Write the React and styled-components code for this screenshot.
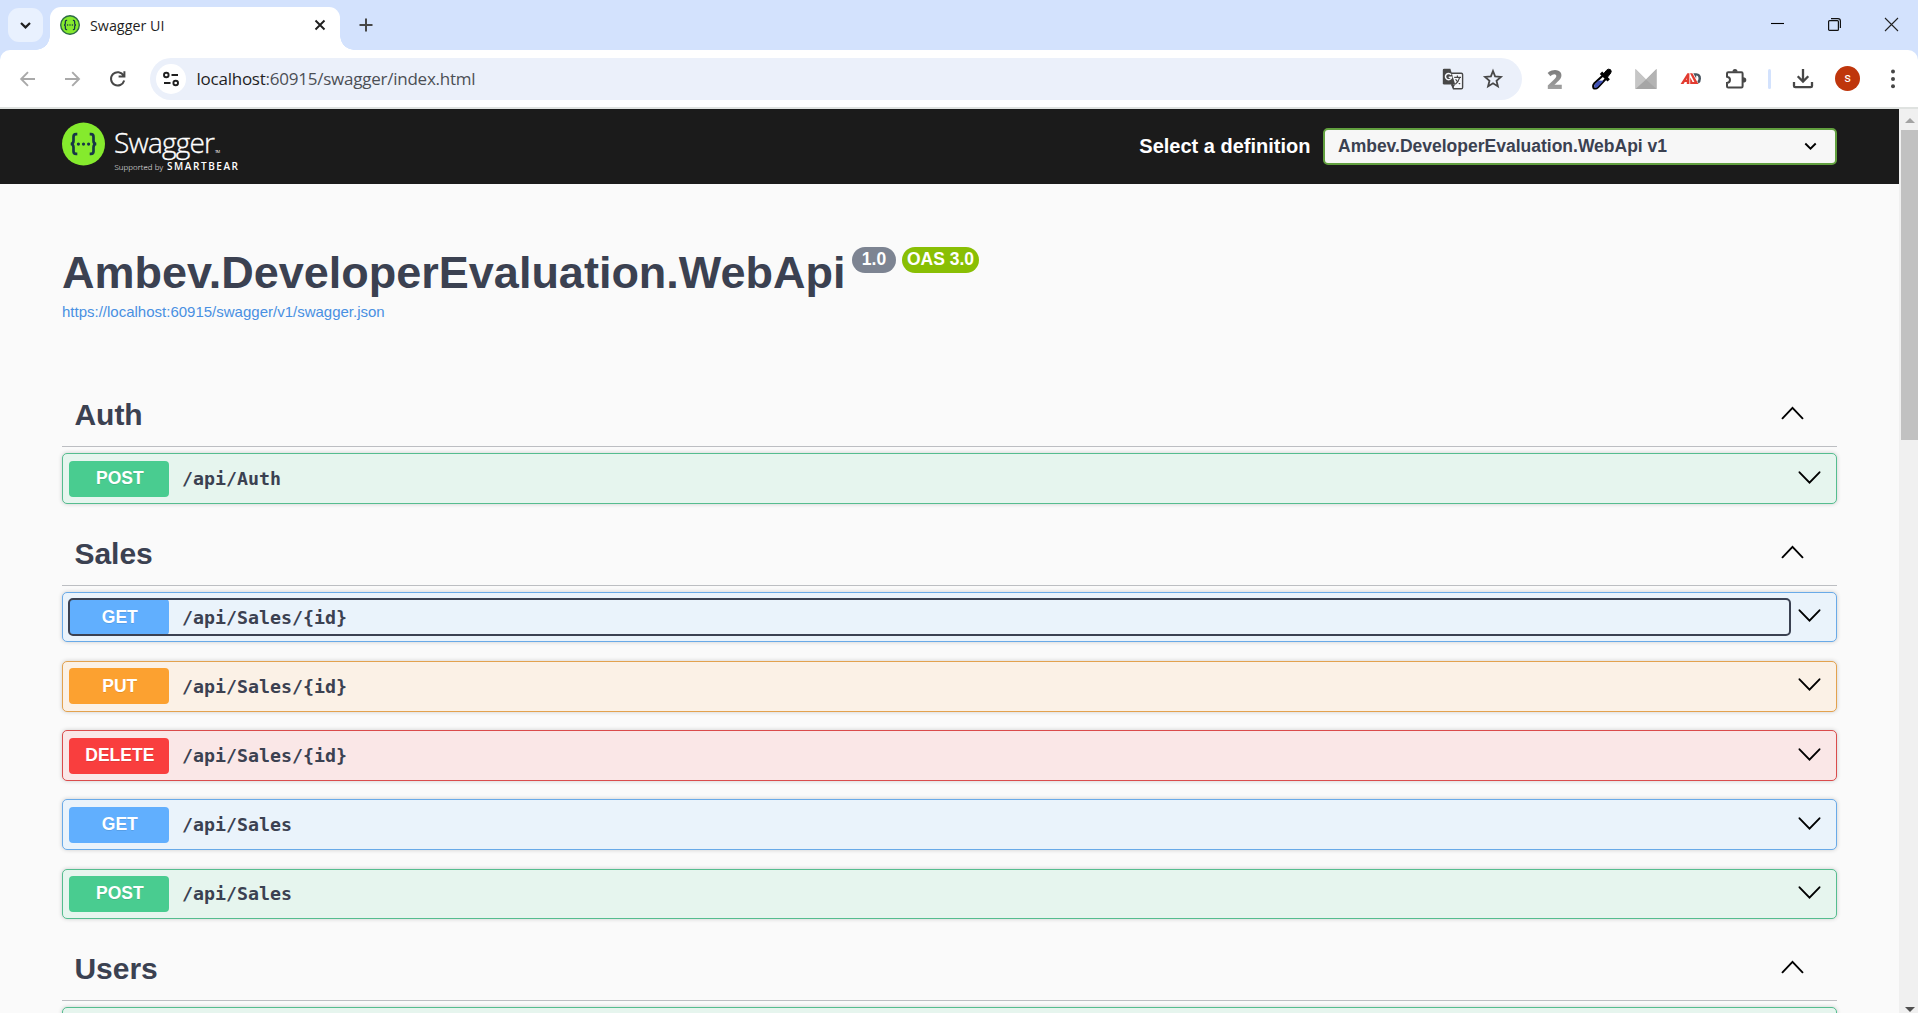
import React from "react";
import styled, { createGlobalStyle } from "styled-components";

const GlobalStyle = createGlobalStyle`
  * { box-sizing: border-box; }
  html, body { margin: 0; padding: 0; overflow: hidden; background: #fafafa; }
  h1, h2, p { margin: 0; }
  button { border: 0; margin: 0; padding: 0; background: none; font: inherit; color: inherit; text-align: left; }
  svg { display: block; flex: none; }
`;

const sans = `"Liberation Sans", Arial, sans-serif`;
const ui = `"Open Sans", "Noto Sans", sans-serif`;
const mono = `"DejaVu Sans Mono", "Liberation Mono", monospace`;

/* ---------- Browser frame ---------- */

const Browser = styled.div`
  display: grid;
  grid-template-columns: 1918px;
  grid-template-rows: 50px 57px 2px 1fr;
  width: 1918px;
  height: 1013px;
  overflow: hidden;
  font-family: ${sans};
`;

const TabStrip = styled.div`
  display: flex;
  align-items: flex-end;
  background: #d3e2fd;
`;

const TabSearch = styled.button`
  display: grid;
  place-items: center;
  align-self: flex-start;
  width: 35px;
  height: 34px;
  margin: 8px 0 0 8px;
  border-radius: 11px;
  background: #e9f1fe;
`;

const TabFlare = styled.div`
  width: 14px;
  height: 14px;
  background: radial-gradient(circle at ${(p) => (p.$side === "left" ? "0 0" : "100% 0")}, transparent 13.5px, #fff 14px);
  margin-left: ${(p) => (p.$side === "left" ? "-7px" : "0")};
`;

const Tab = styled.div`
  display: flex;
  align-items: center;
  width: 290px;
  height: 43px;
  padding: 0 14px 7px 10px;
  border-radius: 11px 11px 0 0;
  background: #fff;
`;

const TabTitle = styled.span`
  flex: 1;
  margin-left: 10px;
  padding-top: 1px;
  font: 400 14.3px/20px ${ui};
  letter-spacing: 0;
  color: #1f1f1f;
  white-space: nowrap;
`;

const NewTab = styled.div`
  align-self: flex-start;
  margin: 18px 0 0 5px;
`;

const WindowButtons = styled.div`
  display: flex;
  align-self: flex-start;
  gap: 42px;
  margin: 17px 19px 0 auto;
`;

const ToolbarEdge = styled.div`
  background: #d3e2fd;
`;

const Toolbar = styled.div`
  display: flex;
  align-items: center;
  height: 57px;
  border-radius: 10px 10px 0 0;
  background: #fff;
`;

const NavIcons = styled.div`
  display: flex;
  gap: 23px;
  width: 150px;
  padding-left: 17px;
`;

const Omnibox = styled.div`
  display: flex;
  align-items: center;
  width: 1372px;
  height: 42px;
  padding: 0 18px 0 6px;
  border-radius: 21px;
  background: #ebf0fa;
`;

const SiteInfo = styled.div`
  display: grid;
  place-items: center;
  width: 30px;
  height: 30px;
  border-radius: 50%;
  background: #fff;
`;

const Url = styled.span`
  flex: 1;
  margin-left: 10.5px;
  padding-top: 1px;
  font: 400 17px/24px ${ui};
  letter-spacing: -0.24px;
  color: #4b4f55;
  white-space: nowrap;

  b {
    font-weight: 400;
    color: #1f1f1f;
  }
`;

const OmniboxActions = styled.div`
  display: flex;
  align-items: center;
  gap: 18px;
`;

const Extensions = styled.div`
  display: grid;
  grid-template-columns: 46px 47px 41px 50px 40px 26px 41px 49px 41px;
  align-items: center;
  justify-items: center;
  margin-left: 10px;
`;

const DigitBadge = styled.span`
  font: 800 27px/30px "Open Sans", ${sans};
  background: linear-gradient(#707070, #ababab);
  background-clip: text;
  color: transparent;
`;

const Separator = styled.i`
  width: 3px;
  height: 20px;
  border-radius: 2px;
  background: #d3e2fd;
`;

const Avatar = styled.span`
  width: 25px;
  height: 25px;
  border-radius: 50%;
  background: #bf360c;
  color: #fff;
  font: 400 13px/24px Roboto, ${sans};
  text-align: center;
`;

const ChromeDivider = styled.div`
  background: #dfe2e0;
`;

const Viewport = styled.div`
  display: flex;
  min-height: 0;
  overflow: hidden;
`;

const ScrollTrack = styled.div`
  display: flex;
  flex-direction: column;
  align-items: center;
  width: 19px;
  padding-left: 2px;
  background: #f0f0f0;
`;

const ScrollArrow = styled.i`
  width: 0;
  height: 0;
  border: 5px solid transparent;
  ${(p) =>
    p.$down
      ? "border-top-color: #505050; border-bottom: 0; margin: auto 0 1px;"
      : "border-bottom-color: #a3a3a3; border-top: 0; margin: 9px 0 7px;"}
`;

const ScrollThumb = styled.div`
  width: 17px;
  height: 310px;
  background: #c1c1c1;
`;

/* ---------- Swagger page ---------- */

const Page = styled.main`
  width: 1899px;
  overflow: hidden;
  background: #fafafa;
  color: #3b4151;
`;

const TopBar = styled.header`
  display: flex;
  align-items: center;
  justify-content: space-between;
  height: 75px;
  padding: 0 62px;
  background: #1b1b1b;
`;

const Definition = styled.div`
  display: flex;
  align-items: center;
  color: #fff;
`;

const DefinitionLabel = styled.span`
  padding-bottom: 2px;
  font: 700 20px/24px ${sans};
  margin-right: 12.5px;
`;

const Select = styled.div`
  display: flex;
  align-items: center;
  justify-content: space-between;
  width: 514px;
  height: 37px;
  padding: 0 18px 0 13px;
  border: 2px solid #62a03f;
  border-radius: 5px;
  background: #f7f7f7;
  color: #3b4151;
  font: 700 17.5px/20px ${sans};
`;

const SelectValue = styled.span`
  padding-bottom: 2px;
`;

const Wrapper = styled.div`
  padding: 0 62px;
`;

const Info = styled.section`
  height: 200.04px;
  padding-top: 62px;
`;

const TitleRow = styled.div`
  display: flex;
  align-items: flex-start;
  height: 57px;
`;

const Title = styled.h1`
  font: 700 45px/54px ${sans};
  white-space: nowrap;
`;

const Badge = styled.span`
  width: ${(p) => p.$width}px;
  height: 26px;
  margin: 1px 0 0 ${(p) => p.$gap}px;
  padding-left: 1px;
  border-radius: 13px;
  background: ${(p) => p.$color};
  color: #fff;
  font: 700 17.5px/24px ${sans};
  text-align: center;
  white-space: nowrap;
`;

const SpecLink = styled.a`
  display: block;
  color: #4990e2;
  font: 400 15px/17px ${sans};
`;

const TagHeader = styled.div`
  display: flex;
  align-items: center;
  justify-content: space-between;
  height: 63.2px;
  margin-bottom: 6.25px;
  padding: 0 33px 0 12.4px;
  border-bottom: 1px solid #bcbec2;

  svg {
    margin-top: -4px;
  }
`;

const TagName = styled.h2`
  font: 700 30px/36px ${sans};
`;

const palette = {
  POST: { solid: "#49cc90", tint: "#e6f5ee", line: "#55bd8f" },
  GET: { solid: "#61affe", tint: "#eaf3fb", line: "#69aae8" },
  PUT: { solid: "#fca130", tint: "#fbf1e6", line: "#e3a24e" },
  DELETE: { solid: "#f93e3e", tint: "#fae7e7", line: "#da4c4c" },
};

const OpBlock = styled.article`
  display: flex;
  align-items: flex-start;
  height: 50.4px;
  margin-bottom: 18.75px;
  padding: 6.25px 15px 0 6px;
  border: 1px solid ${(p) => palette[p.$method].line};
  border-radius: 5px;
  background: ${(p) => palette[p.$method].tint};
  box-shadow: 0 0 4px rgba(0, 0, 0, 0.19);
`;

const OpSummary = styled.button`
  display: flex;
  flex: none;
  align-items: flex-start;
  width: 1721px;
  height: 36px;
  border-radius: 4px;
  outline: ${(p) => (p.$focused ? "2px solid #3b4151" : "none")};
  outline-offset: -1px;
`;

const Method = styled.span`
  width: 100px;
  height: 36px;
  padding: 0.58px 0 0 1.6px;
  border-radius: 4px;
  background: ${(p) => palette[p.$method].solid};
  color: #fff;
  font: 700 17.5px/34px ${sans};
  text-align: center;
  text-shadow: 0 1px 0 rgba(0, 0, 0, 0.1);
`;

const Path = styled.span`
  margin-left: 13px;
  padding-top: 0.58px;
  color: #3b4151;
  font: 700 18.27px/36px ${mono};
  white-space: nowrap;
`;

const OpToggle = styled.button`
  margin: 10px 0 0 8px;
`;

/* ---------- Icons ---------- */

const Stroke = ({ w, h, d, color = "#000", width = 2, cap = "butt", children }) => (
  <svg width={w} height={h} viewBox={`0 0 ${w} ${h}`} fill="none" stroke={color} strokeWidth={width} strokeLinecap={cap}>
    {d && <path d={d} />}
    {children}
  </svg>
);

const ChevronDown = () => <Stroke w={23} h={14} d="M1.5 1.3 L11.5 11.7 L21.5 1.3" width={1.9} cap="round" />;
const ChevronUp = () => <Stroke w={23} h={14} d="M1.5 12.3 L11.5 1.9 L21.5 12.3" width={1.9} cap="round" />;

const Braces = ({ color }) => (
  <g fill="none" stroke={color} strokeWidth="2.7">
    <path d="M15.3 11.6 h-1.2 q-2.6 0 -2.6 2.7 v4 q0 3 -2.7 3.2 q2.7 .2 2.7 3.2 v4 q0 2.7 2.6 2.7 h1.2" />
    <path d="M27.7 11.6 h1.2 q2.6 0 2.6 2.7 v4 q0 3 2.7 3.2 q-2.7 .2 -2.7 3.2 v4 q0 2.7 -2.6 2.7 h-1.2" />
    <g fill={color} stroke="none">
      <circle cx="16.4" cy="21.6" r="1.6" />
      <circle cx="21.5" cy="21.6" r="1.6" />
      <circle cx="26.6" cy="21.6" r="1.6" />
    </g>
  </g>
);

const Favicon = () => (
  <svg width="20" height="20" viewBox="0 0 43 43">
    <circle cx="21.5" cy="21.5" r="20" fill="#85ea2d" stroke="#2d6b45" strokeWidth="3" />
    <Braces color="#173647" />
  </svg>
);

const SwaggerLogo = () => (
  <svg width="180" height="56" viewBox="0 0 180 56">
    <g transform="translate(0 3.5)">
      <circle cx="21.5" cy="21.5" r="21.5" fill="#85ea2d" />
      <Braces color="#173647" />
    </g>
    <g fill="#fff" fontFamily='"Open Sans", sans-serif'>
      <text x="52" y="34" fontSize="28" fontWeight="300" textLength="101" stroke="#fff" strokeWidth=".35">Swagger</text>
      <text x="153" y="34" fontSize="4" textLength="5">TM</text>
      <text x="52.5" y="51" fontSize="7.8" fontWeight="300" textLength="48.5">Supported by</text>
      <text x="105" y="51" fontSize="10" fontWeight="600" textLength="71">SMARTBEAR</text>
    </g>
  </svg>
);

const TranslateIcon = () => (
  <svg width="22" height="22" viewBox="0 0 22 22">
    <path d="M9 5.2 H19.3 q1.3 0 1.3 1.3 V19.4 q0 1.3 -1.3 1.3 H11.5 L8 9z" fill="#f6f8fc" stroke="#474747" strokeWidth="1.4" />
    <path d="M2.2 0.7 H8.4 L13.2 16.6 H2.2 Q.8 16.6 .8 15.2 V2.1 Q.8 .7 2.2 .7z" fill="#474747" />
    <path d="M9.1 6.8 A3.1 3.1 0 1 0 9.6 9.3 H6.7" fill="none" stroke="#f6f8fc" strokeWidth="1.5" />
    <path d="M12.2 9.3 h6.8 M15.4 7.6 v1.8 M17.6 9.6 q-1 4 -4.3 6.6 M13.6 11.3 q1.7 3 4.6 4.8" fill="none" stroke="#474747" strokeWidth="1.2" />
    <path d="M8.8 16.4 H13.2 L10.8 20.6z" fill="#474747" />
  </svg>
);

const StarIcon = () => (
  <Stroke w={22} h={22} color="#474747" width={1.8}
    d="M11 3 L13.1 8.4 L18.9 8.9 L14.5 12.7 L15.9 18.4 L11 15.3 L6.1 18.4 L7.5 12.7 L3.1 8.9 L8.9 8.4z" />
);

const DropperIcon = () => (
  <svg width="22" height="24" viewBox="0 0 22 24">
    <path d="M12.5 8 L15.6 11 L7 20.2 Q5 22.2 2.7 21.2 Q1.4 18.6 3.2 16.6z" fill="#fff" stroke="#000" strokeWidth="2.1" />
    <path d="M7.5 13.6 L12.6 13.8 L6.6 20 Q4.6 21.4 3.4 20.5 Q2.6 19 4 17.2z" fill="#3f51b5" />
    <path d="M10 5.8 L17.7 13.4" stroke="#000" strokeWidth="3.4" />
    <path d="M12.1 7.4 L15.4 3.4 Q17.2 1.4 19.4 2.6 Q21 4.2 19.6 6.2 L16 10.8z" fill="#000" stroke="#000" />
  </svg>
);

const EnvelopeIcon = () => (
  <svg width="22" height="20" viewBox="0 0 22 20">
    <path d="M.5 0 L11 10.5 L21.5 0 V20 H.5z" fill="#a6a6a6" />
    <path d="M.5 0 L11 10.5 L.5 20z" fill="#c6c6c6" />
    <path d="M21.5 0 V20 L11 10.5z" fill="#b3b3b3" />
  </svg>
);

const BlockerIcon = () => (
  <svg width="22" height="13" viewBox="0 0 22 13">
    <path d="M.6 12 L7.4 1.2 H9.4 V12 H6.8 V9.9 H4.8 L3.5 12z M6 7.8 H6.9 V6.3z" fill="#e23b30" fillRule="evenodd" />
    <path d="M10 1.2 H12.4 L18.4 12 H10.2 V5.4 L12.3 9.2 V10 H14.4z" fill="#e23b30" />
    <path d="M13.3 1.2 H16.4 Q21 1.6 21 6.4 Q21 10 18.6 11.4 L17.4 9.2 Q18.5 8.2 18.5 6.4 Q18.5 3.6 16.2 3.5 V6.6z" fill="#47545f" />
  </svg>
);

const PuzzleIcon = () => (
  <svg width="22" height="22" viewBox="0 0 22 22">
    <path d="M3.2 4.2 H16.4 Q17.6 4.2 17.6 5.4 V18.3 Q17.6 19.5 16.4 19.5 H3.2 Q2 19.5 2 18.3 V15 Q5 14.6 5 11.8 Q5 9 2 8.7 V5.4 Q2 4.2 3.2 4.2z" fill="none" stroke="#474747" strokeWidth="2" />
    <path d="M7.5 3.8 Q7.5 1 10 1 Q12.5 1 12.5 3.8z M18 9.2 Q21.3 9.2 21.3 11.9 Q21.3 14.5 18 14.5z" fill="#474747" />
  </svg>
);

const windowIcons = {
  minimise: <Stroke w={15} h={15} d="M1 6.5 H14" width={1.1} />,
  restore: (
    <Stroke w={15} h={15} color="#111" width={1.2}>
      <rect x="1.6" y="3.6" width="9.8" height="9.8" rx="1" />
      <path d="M4 1.6 H11 Q13.4 1.6 13.4 4 V11" />
    </Stroke>
  ),
  close: <Stroke w={15} h={15} d="M1 1 L14 14 M14 1 L1 14" color="#222" width={1.1} />,
};

const Operation = ({ method, path, focused }) => (
  <OpBlock $method={method}>
    {path && (
      <>
        <OpSummary $focused={focused}>
          <Method $method={method}>{method}</Method>
          <Path>{path}</Path>
        </OpSummary>
        <OpToggle aria-label="Expand"><ChevronDown /></OpToggle>
      </>
    )}
  </OpBlock>
);

const sections = [
  { name: "Auth", ops: [["POST", "/api/Auth"]] },
  {
    name: "Sales",
    ops: [
      ["GET", "/api/Sales/{id}", true],
      ["PUT", "/api/Sales/{id}"],
      ["DELETE", "/api/Sales/{id}"],
      ["GET", "/api/Sales"],
      ["POST", "/api/Sales"],
    ],
  },
  { name: "Users", ops: [["POST", ""]] },
];

export default function App() {
  return (
    <Browser>
      <GlobalStyle />
      <TabStrip>
        <TabSearch aria-label="Search tabs">
          <Stroke w={13} h={9} d="M2 2 L6.5 6.4 L11 2" color="#1f1f1f" width={2.2} />
        </TabSearch>
        <TabFlare $side="left" />
        <Tab>
          <Favicon />
          <TabTitle>Swagger UI</TabTitle>
          <Stroke w={12} h={12} d="M1.5 1.5 L10.5 10.5 M10.5 1.5 L1.5 10.5" color="#1f1f1f" width={1.9} />
        </Tab>
        <TabFlare $side="right" />
        <NewTab>
          <Stroke w={14} h={14} d="M7 .5 V13.5 M.5 7 H13.5" color="#474747" />
        </NewTab>
        <WindowButtons>
          {windowIcons.minimise}
          {windowIcons.restore}
          {windowIcons.close}
        </WindowButtons>
      </TabStrip>

      <ToolbarEdge>
        <Toolbar>
          <NavIcons>
            <Stroke w={22} h={22} d="M18 11 H4.5 M11 4.2 L4.2 11 L11 17.8" color="#a9a9a9" width={1.9} />
            <Stroke w={22} h={22} d="M3 11 H17 M10.2 4.2 L17 11 L10.2 17.8" color="#a9a9a9" width={1.9} />
            <Stroke w={22} h={22} d="M16.6 7.6 A6.7 6.7 0 1 0 17.2 12.6 M17.4 3.2 V8.6 H11.6" color="#474747" />
          </NavIcons>
          <Omnibox>
            <SiteInfo>
              <Stroke w={18} h={18} color="#1f1f1f" width={1.9}>
                <circle cx="4.3" cy="5" r="2.3" />
                <path d="M9.5 5 H16 M2 13 H8.5" />
                <circle cx="13.7" cy="13" r="2.3" />
              </Stroke>
            </SiteInfo>
            <Url><b>localhost</b>:60915/swagger/index.html</Url>
            <OmniboxActions>
              <TranslateIcon />
              <StarIcon />
            </OmniboxActions>
          </Omnibox>
          <Extensions>
            <DigitBadge>2</DigitBadge>
            <DropperIcon />
            <EnvelopeIcon />
            <BlockerIcon />
            <PuzzleIcon />
            <Separator />
            <Stroke w={22} h={22} d="M11 1 V13.4 M5.7 8.3 L11 13.6 L16.3 8.3 M2 14 V17.9 Q2 19.2 3.3 19.2 H18.7 Q20 19.2 20 17.9 V14" color="#474747" width={2.3} />
            <Avatar>s</Avatar>
            <svg width="6" height="20" viewBox="0 0 6 20" fill="#474747">
              <circle cx="3" cy="2.4" r="2" />
              <circle cx="3" cy="10" r="2" />
              <circle cx="3" cy="17.2" r="2" />
            </svg>
          </Extensions>
        </Toolbar>
      </ToolbarEdge>
      <ChromeDivider />

      <Viewport>
        <Page>
          <TopBar>
            <SwaggerLogo />
            <Definition>
              <DefinitionLabel>Select a definition</DefinitionLabel>
              <Select>
                <SelectValue>Ambev.DeveloperEvaluation.WebApi v1</SelectValue>
                <Stroke w={13} h={9} d="M1.3 1.5 L6.5 6.7 L11.7 1.5" width={1.9} />
              </Select>
            </Definition>
          </TopBar>
          <Wrapper>
            <Info>
              <TitleRow>
                <Title>Ambev.DeveloperEvaluation.WebApi</Title>
                <Badge $width={44} $gap={6} $color="#7d8492">1.0</Badge>
                <Badge $width={77} $gap={6} $color="#89bf04">OAS 3.0</Badge>
              </TitleRow>
              <SpecLink>https://localhost:60915/swagger/v1/swagger.json</SpecLink>
            </Info>
            {sections.map((section) => (
              <section key={section.name}>
                <TagHeader>
                  <TagName>{section.name}</TagName>
                  <ChevronUp />
                </TagHeader>
                {section.ops.map(([method, path, focused]) => (
                  <Operation key={method + path} method={method} path={path} focused={focused} />
                ))}
              </section>
            ))}
          </Wrapper>
        </Page>
        <ScrollTrack>
          <ScrollArrow />
          <ScrollThumb />
          <ScrollArrow $down />
        </ScrollTrack>
      </Viewport>
    </Browser>
  );
}
